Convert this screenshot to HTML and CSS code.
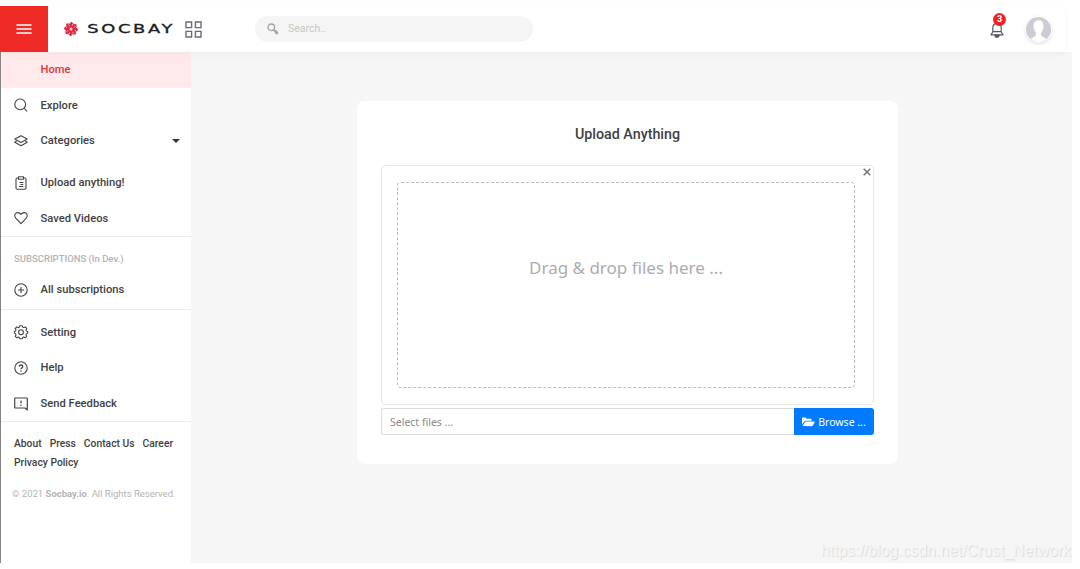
FILE: index.html
```html
<!DOCTYPE html>
<html lang="en">
<head>
    <meta charset="UTF-8">
    <meta name="viewport" content="width=device-width, initial-scale=1.0">
    <title>Socbay - Upload Anything</title>
    <link rel="stylesheet" href="styles.css">
</head>
<body>
    <div class="app">
        <header class="header">
            <button class="menu-btn" type="button" aria-label="Menu">
                <svg width="16" height="12" viewBox="0 0 16 12" stroke="#fff" stroke-width="1.4"><path d="M0.5 2h15M0.5 6h15M0.5 10h15"/></svg>
            </button>
            <a class="logo" href="#">
                <svg class="logo-mark" width="16" height="16" viewBox="-8 -8 16 16">
                    <defs><path id="petal" d="M0 -0.8 L-2.2 -4.4 L0.2 -7.2 L2.7 -5.6 L0.9 -4.4 L1.2 -2 Z"/></defs>
                    <g fill="#dd2a3e">
                        <use href="#petal"/>
                        <use href="#petal" transform="rotate(45)"/>
                        <use href="#petal" transform="rotate(90)"/>
                        <use href="#petal" transform="rotate(135)"/>
                        <use href="#petal" transform="rotate(180)"/>
                        <use href="#petal" transform="rotate(225)"/>
                        <use href="#petal" transform="rotate(270)"/>
                        <use href="#petal" transform="rotate(315)"/>
                    </g>
                </svg>
                <svg class="logo-text" width="84" height="12" viewBox="0 0 84 12"><text transform="scale(1.55 1)" x="-0.5" y="10" textLength="55" lengthAdjust="spacing">SOCBAY</text></svg>
            </a>
            <svg class="grid-icon" width="17" height="17" viewBox="0 0 17 17" fill="none" stroke="#686b78" stroke-width="1.4"><path d="M1 1h5.6v5.6H1zM10.4 1H16v5.6h-5.6zM1 10.4h5.6V16H1zM10.4 10.4H16V16h-5.6z"/></svg>
            <div class="search">
                <svg width="12" height="12" viewBox="0 0 12 12" fill="none" stroke="#a3a3a3"><circle cx="4.3" cy="4.3" r="3.3" stroke-width="1.3"/><path d="M6.7 6.7l1.5 1.5" stroke-width="1.3"/><path d="M8.6 8.6l1.300 1.300" stroke-width="2.8" stroke-linecap="round"/></svg>
                <input type="text" placeholder="Search..">
            </div>
            <div class="bell">
                <svg width="14" height="16" viewBox="0 0 14 16" fill="none" stroke="#555b66" stroke-width="1.2" stroke-linejoin="round"><path d="M2.800 10V5.5a4.200 4.200 0 0 1 8.400 0V10l1.900 2.800H.9L2.800 10zM2.800 9.600h8.400"/><path d="M5 13.200a2 2 0 0 0 4 0z" fill="#555b66"/></svg>
                <span class="badge">3</span>
            </div>
            <div class="avatar">
                <svg width="25" height="25" viewBox="0 0 25 25"><circle cx="12.5" cy="12.5" r="12.5" fill="#cbccd4"/><path d="M12.5 3.200c-3.500 0-5 2.500-5 5.900 0 3 1.100 5.100 2.200 6.200.6 3-.2 4.200-3.200 5.400l-1.800 1A12.5 12.5 0 0 0 12.5 25a12.5 12.5 0 0 0 7.800-3.300l-1.800-1c-3-1.200-3.800-2.400-3.200-5.400 1.100-1.100 2.200-3.200 2.200-6.200 0-3.400-1.500-5.900-5-5.900z" fill="#fff"/></svg>
            </div>
        </header>

        <div class="body">
            <nav class="sidebar">
                <ul class="menu">
                    <li class="active"><a href="#"><span class="icon"></span>Home</a></li>
                    <li><a href="#"><svg class="icon" viewBox="0 0 14 14"><circle cx="6.2" cy="6.4" r="5.4"/><path d="M10.2 10.4l3 3"/></svg>Explore</a></li>
                    <li><a href="#"><svg class="icon" viewBox="0 0 14 14"><path d="M7 1.8l6.2 3.3L7 8.4.8 5.1zM2.6 7L.8 8.2 7 11.7l6.2-3.5L11.4 7"/></svg>Categories<span class="caret"></span></a></li>
                </ul>
                <ul class="menu second">
                    <li><a href="#"><svg class="icon" viewBox="0 0 14 14"><path d="M4.5 2H3.2A1.2 1.2 0 0 0 2 3.2v8.9a1.2 1.2 0 0 0 1.2 1.2h7.6a1.2 1.2 0 0 0 1.2-1.2V3.2A1.2 1.2 0 0 0 10.8 2H9.5M4.5.8h5v2.5h-5zM5.5 6.500h3.800M6.500 8.500h2.800M5 10.500h4.300"/></svg>Upload anything!</a></li>
                    <li><a href="#"><svg class="icon" viewBox="0 0 14 14"><path d="M7 12.6L1.7 7.100C-.6 4.500 1.400 1.500 4 1.600c1.400.1 2.300.8 3 1.800.7-1 1.600-1.700 3-1.800 2.600-.1 4.600 2.900 2.300 5.500z"/></svg>Saved Videos</a></li>
                </ul>
                <h6 class="menu-title">SUBSCRIPTIONS (In Dev.)</h6>
                <ul class="menu subs">
                    <li><a href="#"><svg class="icon" viewBox="0 0 14 14"><circle cx="7" cy="7" r="6.2"/><path d="M7 4v6M4 7h6"/></svg>All subscriptions</a></li>
                </ul>
                <ul class="menu third">
                    <li><a href="#"><svg class="icon" viewBox="0 0 14 14"><path d="M5.8.7h2.400l.5 1.500 1 .4 1.500-.7 1.500 1.500-.7 1.500.4 1 1.300.5v1.600l-1.300.9-.4 1 .7 1.400-1.500 1.500-1.500-.7-1 .4-.5 1.300H5.800l-.5-1.300-1-.4-1.500.7-1.500-1.500.7-1.400-.4-1L.4 8V6.400l1.200-.5.4-1-.7-1.500 1.500-1.500 1.500.7 1-.4z"/><circle cx="7" cy="7.200" r="2.400"/></svg>Setting</a></li>
                    <li><a href="#"><svg class="icon" viewBox="0 0 14 14"><circle cx="7" cy="7" r="6.2"/><path d="M5.3 5.7c0-2.300 3.500-2.200 3.500-.1C8.800 6.900 7 6.900 7 8.300M7 9.400v1.300" stroke-width="1.3"/></svg>Help</a></li>
                    <li><a href="#"><svg class="icon" viewBox="0 0 14 14"><path d="M1.200 1h11.600a.5.5 0 0 1 .5.5V13l-2.300-2H1.200a.5.5 0 0 1-.5-.5v-9a.5.5 0 0 1 .5-.5zM7 3.500v3M7 7.700V9" stroke-width="1.2"/></svg>Send Feedback</a></li>
                </ul>
                <div class="footer-links">
                    <a href="#">About</a><a href="#">Press</a><a href="#">Contact Us</a><a href="#">Career</a><a href="#">Privacy Policy</a>
                </div>
                <p class="copyright">© 2021 <b>Socbay.io</b>. All Rights Reserved.</p>
            </nav>

            <main class="content">
                <div class="card">
                    <h3>Upload Anything</h3>
                    <div class="preview">
                        <button class="close" type="button" aria-label="Close">
                            <svg width="8" height="8" viewBox="0 0 8 8" stroke="#777" stroke-width="1.5"><path d="M.7.7l6.600 6.600M7.300.7L.7 7.300"/></svg>
                        </button>
                        <div class="drop-zone"><span>Drag &amp; drop files here ...</span></div>
                    </div>
                    <div class="file-row">
                        <input class="caption" type="text" placeholder="Select files ..." readonly>
                        <button class="browse" type="button">
                            <svg width="13" height="10" viewBox="0 0 14 10" fill="#fff"><path d="M0 7.6V1.2C0 .6.4.2 1 .2h2.800c.6 0 1 .4 1 1v.4h4.600c.6 0 1 .4 1 1v1H4.200c-.8 0-1.500.4-2 1zM.6 9.4l2.500-4.200c.3-.5.7-.7 1.200-.7h8.900c.5 0 .7.4.5.8l-2 3.500c-.3.5-.7.7-1.200.7z"/></svg>
                            <span>Browse ...</span>
                        </button>
                    </div>
                </div>
                <span class="watermark">https://blog.csdn.net/Crust_Network</span>
            </main>
        </div>
    </div>
</body>
</html>
```
FILE: styles.css
```css
* {
    margin: 0;
    padding: 0;
    box-sizing: border-box;
}
body {
    font-family: Roboto, 'Liberation Sans', sans-serif;
    background: #fff;
    color: #3f3f3f;
    height: 569px;
    overflow: hidden;
}
a {
    color: inherit;
    text-decoration: none;
}
ul {
    list-style: none;
}
button, input {
    border: none;
    outline: none;
    font-family: inherit;
}
svg {
    display: block;
    flex-shrink: 0;
}
.app {
    width: 1072px;
    height: 563px;
    padding-top: 6px;
    display: flex;
    flex-direction: column;
}

/* header */
.header {
    height: 46px;
    width: 1065px;
    display: flex;
    align-items: center;
    background: #fff;
    position: relative;
    box-shadow: 0 2px 6px rgba(0, 0, 0, 0.04);
}
.menu-btn {
    width: 48px;
    height: 46px;
    background: #ee2a26;
    display: flex;
    align-items: center;
    justify-content: center;
}
.logo {
    display: flex;
    align-items: center;
    margin-left: 15px;
    gap: 9px;
}
.logo-text {
    overflow: visible;
}
.logo-text text {
    font-family: 'DejaVu Sans', sans-serif;
    font-size: 11.5px;
    fill: #1c1c1c;
    stroke: #1c1c1c;
    stroke-width: 0.3px;
}
.grid-icon {
    margin-left: 13px;
}
.search {
    width: 278px;
    height: 26px;
    margin-left: 53px;
    margin-bottom: 1px;
    padding-left: 12px;
    border-radius: 13px;
    background: #f5f5f5;
    display: flex;
    align-items: center;
    gap: 9px;
}
.search input {
    background: transparent;
    font-size: 10.5px;
    width: 200px;
}
.search input::placeholder {
    color: #c6c6c6;
}
.bell {
    margin-left: auto;
    padding-top: 2px;
    position: relative;
}
.badge {
    position: absolute;
    top: -7px;
    left: 3px;
    width: 13px;
    height: 13px;
    border-radius: 50%;
    background: #ee2226;
    color: #fff;
    font-size: 9px;
    font-weight: bold;
    line-height: 13px;
    text-align: center;
}
.avatar {
    margin: 0 14px 0 22px;
    border-radius: 50%;
    box-shadow: 0 0 0 1px #fff, 0 1px 3px 1px rgba(0, 0, 0, 0.14);
}

/* sidebar */
.body {
    flex: 1;
    display: flex;
    background: #f6f6f6;
}
.sidebar {
    width: 191px;
    background: #fff;
    border-left: 1px solid #858585;
}
.menu a {
    height: 35.6px;
    display: flex;
    align-items: center;
    padding: 0 11px 0 13px;
    font-size: 11.2px;
    font-weight: 500;
}
.icon {
    width: 14px;
    height: 14px;
    margin-right: 12.500px;
    fill: none;
    stroke: #444;
    stroke-width: 1.1;
    stroke-linejoin: round;
    overflow: visible;
}
.menu .active {
    background: #ffe9ea;
    color: #e5353a;
}
.caret {
    margin-left: auto;
    border: 4px solid transparent;
    border-top-color: #333;
    border-bottom: none;
}
.second {
    padding: 6px 0 0;
    border-bottom: 1px solid #ebebeb;
}
.menu-title {
    font-size: 9.5px;
    font-weight: 500;
    color: #b4b4b4;
    line-height: 12px;
    padding: 16px 13px 7px;
}
.subs {
    padding-bottom: 1px;
    border-bottom: 1px solid #ebebeb;
}
.third {
    padding: 5px 0 0;
    border-bottom: 1px solid #ebebeb;
}
.footer-links {
    display: flex;
    flex-wrap: wrap;
    column-gap: 8px;
    padding: 12px 10px 0 13px;
    font-size: 10.3px;
    font-weight: 500;
    line-height: 19px;
}
.copyright {
    padding: 16px 0 0 11px;
    font-size: 9.5px;
    line-height: 12px;
    color: #b5b5b5;
    white-space: nowrap;
}

/* upload card */
.content {
    flex: 1;
    position: relative;
    padding: 49px 0 0 166px;
}
.card {
    width: 541px;
    height: 363px;
    padding: 24px 24px 0;
    background: #fff;
    border-radius: 8px;
}
.card h3 {
    font-size: 14.3px;
    font-weight: 500;
    line-height: 19px;
    text-align: center;
    margin-bottom: 21px;
}
.preview {
    height: 240px;
    padding: 16px 18px 16px 15px;
    border: 1px solid #e9e9e9;
    border-radius: 4px;
    position: relative;
}
.close {
    position: absolute;
    top: 2px;
    right: 2px;
    padding: 0;
    background: none;
}
.drop-zone {
    height: 206px;
    border: 1px dashed #bbb;
    border-radius: 4px;
    display: flex;
    justify-content: center;
    padding-top: 71px;
    font-family: 'Noto Sans', 'Open Sans', sans-serif;
    font-size: 17px;
    line-height: 28px;
    color: #adadad;
}
.file-row {
    display: flex;
    height: 27px;
    margin-top: 3px;
}
.caption {
    flex: 1;
    min-width: 0;
    padding-left: 8px;
    border: 1px solid #dcdcdc;
    border-right: none;
    border-radius: 3px 0 0 3px;
    font-family: 'Noto Sans', 'Open Sans', sans-serif;
    font-size: 10.5px;
}
.caption::placeholder {
    color: #8a8a8a;
}
.browse {
    width: 80px;
    display: flex;
    align-items: center;
    justify-content: center;
    gap: 3px;
    background: #007bff;
    border-radius: 0 3px 3px 0;
    color: #fff;
    font-family: 'Noto Sans', 'Open Sans', sans-serif;
    font-size: 10.5px;
}
.watermark {
    position: absolute;
    right: 1px;
    bottom: 3px;
    font-family: 'Liberation Sans', sans-serif;
    font-size: 15.8px;
    line-height: 18px;
    color: #f6f6f6;
    text-shadow: 1px 1px 1px #d8d8d8;
}
```
